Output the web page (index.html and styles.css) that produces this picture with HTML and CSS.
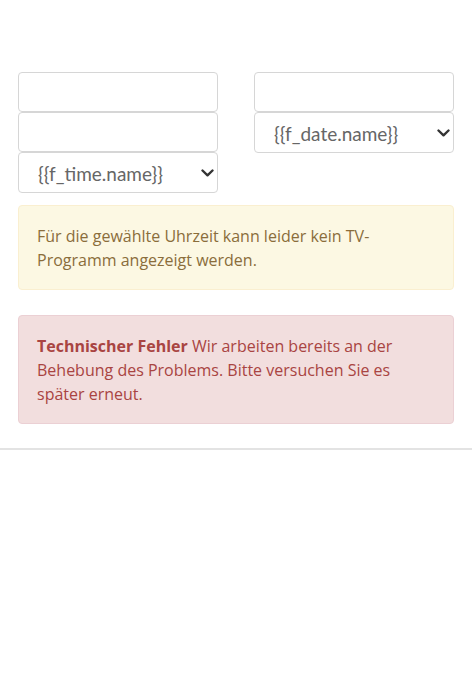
FILE: index.html
```html
<!DOCTYPE html>
<html lang="de">
<head>
<meta charset="utf-8">
<title>TV-Programm</title>
<link rel="stylesheet" href="styles.css">
</head>
<body>
<div class="page">
  <div class="container">
    <div class="form-row">
      <div class="col">
        <input class="field" type="text">
        <input class="field" type="text">
        <div class="select-wrap">
          <select class="field select"><option>{{f_time.name}}</option></select>
          <svg class="chev" width="13" height="8" viewBox="0 0 13 8"><path d="M1.5 1.5 L6.5 6.3 L11.5 1.5" fill="none" stroke="#333" stroke-width="2.4" stroke-linecap="round" stroke-linejoin="round"/></svg>
        </div>
      </div>
      <div class="col">
        <input class="field" type="text">
        <div class="select-wrap">
          <select class="field select"><option>{{f_date.name}}</option></select>
          <svg class="chev" width="13" height="8" viewBox="0 0 13 8"><path d="M1.5 1.5 L6.5 6.3 L11.5 1.5" fill="none" stroke="#333" stroke-width="2.4" stroke-linecap="round" stroke-linejoin="round"/></svg>
        </div>
      </div>
    </div>
    <div class="alert alert-warning">Für die gewählte Uhrzeit kann leider kein TV-Programm angezeigt werden.</div>
    <div class="alert alert-danger"><strong>Technischer Fehler</strong> <span>Wir arbeiten bereits an der Behebung des Problems. Bitte versuchen Sie es später erneut.</span></div>
  </div>
  <hr class="divider">
</div>
</body>
</html>
```
FILE: styles.css
```css
* { box-sizing: border-box; }
html, body { margin: 0; padding: 0; background: #fff; }
body {
  font-family: "Open Sans", "Noto Sans", sans-serif;
  font-size: 16px;
  line-height: 24px;
  color: #333;
}
.page { padding-top: 72px; }
.container { padding: 0 18px; }
.form-row {
  display: grid;
  grid-template-columns: 1fr 1fr;
  column-gap: 36px;
}
.col { display: flex; flex-direction: column; }
.field {
  display: block;
  width: 100%;
  height: 40px;
  margin: 0;
  border: 1px solid #d6d6d6;
  border-radius: 4px;
  background: #fff;
  font-family: inherit;
  font-size: 16px;
  color: #555;
  padding: 0 12px;
  outline: none;
}
.select-wrap { position: relative; }
.select {
  -webkit-appearance: none;
  appearance: none;
  height: 41px;
  padding: 1px 30px 0 19px;
  font-family: "Lato", "Open Sans", sans-serif;
  font-size: 19px;
  color: #666;
}
.chev {
  position: absolute;
  right: 4px;
  top: 17px;
  pointer-events: none;
}
.alert {
  border: 1px solid;
  border-radius: 4px;
  padding: 17.5px 18px;
  font-size: 16px;
  line-height: 24px;
}
.alert-warning {
  margin-top: 12px;
  background: #fcf8e3;
  border-color: #faefd0;
  color: #8a6d3b;
}
.alert-danger {
  margin-top: 25px;
  background: #f2dede;
  border-color: #ebd0d4;
  color: #a94442;
}
.alert strong { font-weight: 700; }
.divider {
  margin: 24px 0 0;
  border: 0;
  border-top: 2px solid #e3e3e3;
}
```
